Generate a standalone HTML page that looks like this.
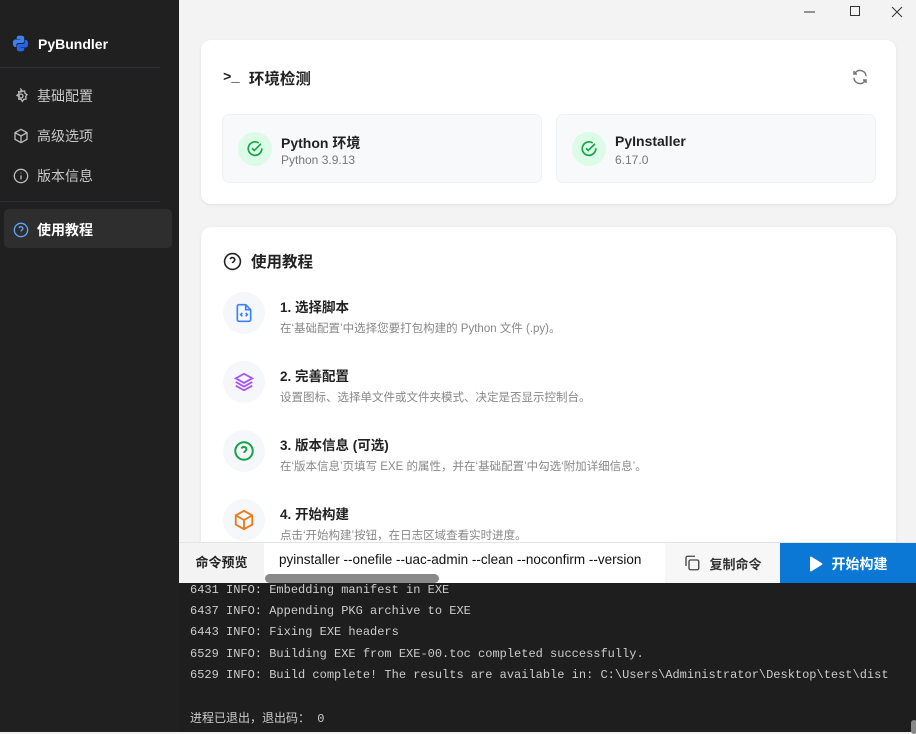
<!DOCTYPE html>
<html><head><meta charset="utf-8"><style>
*{box-sizing:border-box;margin:0;padding:0}
body{width:916px;height:732px;overflow:hidden;background:#f3f3f3;font-family:"Liberation Sans","Noto Sans CJK SC",sans-serif;position:relative}
.side{position:absolute;left:0;top:0;width:179px;height:732px;background:#202020;color:#cfcfcf}
.logo{position:absolute;left:11px;top:34px;display:flex;align-items:center;gap:8px;color:#fff;font-weight:bold;font-size:14px}
.sep{position:absolute;left:0;width:160px;height:1px;background:#2c2f33}
.nav{position:absolute;left:13px;display:flex;align-items:center;gap:8px;font-size:14px;color:#c8c8c8}
.active{position:absolute;left:4px;top:209px;width:168px;height:39px;background:#2e2e2e;border-radius:5px}
.card{position:absolute;background:#fff;border-radius:10px;box-shadow:0 1px 3px rgba(0,0,0,.08)}
.h{position:absolute;font-size:15.5px;font-weight:bold;color:#222;display:flex;align-items:center;gap:9px}
.sub{position:absolute;top:74px;width:320px;height:69px;background:#f7f9fb;border:1px solid #eef1f4;border-radius:7px}
.ok{position:absolute;left:15px;top:17px;width:34px;height:34px;border-radius:50%;background:#dcfce7;display:flex;align-items:center;justify-content:center}
.st{position:absolute;left:58px;top:18px;font-size:14px;font-weight:bold;color:#222}
.sv{position:absolute;left:58px;top:38px;font-size:12px;color:#777}
.step{position:absolute;left:22px;width:680px;height:60px}
.ci{position:absolute;left:0;top:0;width:42px;height:42px;border-radius:50%;background:#f5f7fa;display:flex;align-items:center;justify-content:center}
.t{position:absolute;left:57px;top:4px;font-size:13.5px;font-weight:bold;color:#222}
.d{position:absolute;left:57px;top:28px;font-size:11.5px;color:#888;white-space:nowrap}
.bar{position:absolute;left:179px;top:542px;width:737px;height:41px;background:#fff;border-top:1px solid #e5e5e5}
.log{position:absolute;left:179px;top:583px;width:737px;height:149px;background:#1e1e1e;font-family:"Liberation Mono","Noto Sans CJK SC",monospace;font-size:12px;color:#cccccc}
.log div{position:absolute;left:11px;white-space:pre}
</style></head><body>
<div class="side">
 <div class="logo"><svg width="19" height="19" viewBox="0 0 24 24"><path d="M11.8 2C7 2 7.3 4.1 7.3 4.1v2.2h4.6V7H5.5S2.4 6.6 2.4 11.6s2.700 4.8 2.700 4.8h1.600v-2.300s-.1-2.700 2.700-2.700h4.600s2.600 0 2.600-2.500V4.600S17 2 11.8 2z" fill="#3b82f6"/><path d="M12.2 22c4.800 0 4.500-2.100 4.500-2.100v-2.200h-4.600V17h6.400s3.100.4 3.100-4.600-2.700-4.800-2.700-4.800h-1.600v2.300s.1 2.700-2.700 2.700H10s-2.600 0-2.600 2.500v4.300S7 22 12.200 22z" fill="#2563eb"/></svg>PyBundler</div>
 <div class="sep" style="top:67px"></div>
 <div class="nav" style="top:86px"><svg width="16" height="16" viewBox="0 0 24 24" fill="none" stroke="#bbb" stroke-width="2"><circle cx="12" cy="12" r="3"/><path d="M12 2l2 3 3.500-.5.500 3.500 3 2-2 3 .5 3.500-3.500.5-2 3-2-3-3.500-.5.5-3.500-3-2 3-2-.5-3.500 3.500.5z"/></svg>基础配置</div>
 <div class="nav" style="top:126px"><svg width="16" height="16" viewBox="0 0 24 24" fill="none" stroke="#bbb" stroke-width="2"><path d="M12 2l9 5v10l-9 5-9-5V7z M3 7l9 5 9-5 M12 12v10"/></svg>高级选项</div>
 <div class="nav" style="top:166px"><svg width="16" height="16" viewBox="0 0 24 24" fill="none" stroke="#bbb" stroke-width="2"><circle cx="12" cy="12" r="10"/><path d="M12 11v6M12 7v1"/></svg>版本信息</div>
 <div class="sep" style="top:201px"></div>
 <div class="active"></div>
 <div class="nav" style="top:220px;color:#fff;font-weight:bold"><svg width="16" height="16" viewBox="0 0 24 24" fill="none" stroke="#60a5fa" stroke-width="2"><circle cx="12" cy="12" r="10"/><path d="M9.100 9a3 3 0 015.800 1c0 2-3 2.500-3 4M12 17.500v.1"/></svg>使用教程</div>
</div>
<svg style="position:absolute;left:804px;top:5px" width="100" height="14" viewBox="0 0 100 14" fill="none" stroke="#333" stroke-width="1"><path d="M0 7h11"/><rect x="46.500" y="1.500" width="9" height="9"/><path d="M88 2l10 10M98 2L88 12"/></svg>
<div class="card" style="left:201px;top:40px;width:695px;height:164px">
 <div class="h" style="left:22px;top:27px"><span style="font-family:'Liberation Mono',monospace;font-size:14px">&gt;_</span>环境检测</div>
 <svg style="position:absolute;left:650px;top:28px" width="18" height="18" viewBox="0 0 24 24" fill="none" stroke="#777" stroke-width="2"><path d="M20 11A8 8 0 006 6l-2 2M4 4v4h4M4 13a8 8 0 0014 5l2-2M20 20v-4h-4"/></svg>
 <div class="sub" style="left:21px"><div class="ok"><svg width="18" height="18" viewBox="0 0 24 24" fill="none" stroke="#16a34a" stroke-width="2.200"><path d="M21 11a9 9 0 11-4-7"/><path d="M8 11l3 3 9-9"/></svg></div><div class="st">Python 环境</div><div class="sv">Python 3.9.13</div></div>
 <div class="sub" style="left:355px"><div class="ok"><svg width="18" height="18" viewBox="0 0 24 24" fill="none" stroke="#16a34a" stroke-width="2.200"><path d="M21 11a9 9 0 11-4-7"/><path d="M8 11l3 3 9-9"/></svg></div><div class="st">PyInstaller</div><div class="sv">6.17.0</div></div>
</div>
<div class="card" style="left:201px;top:227px;width:695px;height:330px;overflow:hidden">
 <div class="h" style="left:22px;top:23px"><svg width="19" height="19" viewBox="0 0 24 24" fill="none" stroke="#222" stroke-width="2"><circle cx="12" cy="12" r="10"/><path d="M9.100 9a3 3 0 015.800 1c0 2-3 2.500-3 4M12 17.500v.1"/></svg>使用教程</div>
 <div class="step" style="top:65px"><div class="ci"><svg width="20" height="20" viewBox="0 0 24 24" fill="none" stroke="#3b82f6" stroke-width="2"><path d="M14 2H6a2 2 0 00-2 2v16a2 2 0 002 2h12a2 2 0 002-2V8z M14 2v6h6 M10 12l-2 2 2 2 M14 12l2 2-2 2"/></svg></div><div class="t">1. 选择脚本</div><div class="d">在‘基础配置’中选择您要打包构建的 Python 文件 (.py)。</div></div>
 <div class="step" style="top:134px"><div class="ci"><svg width="22" height="22" viewBox="0 0 24 24" fill="none" stroke="#a855f7" stroke-width="2"><path d="M12 3l9 5-9 5-9-5z M3 12l9 5 9-5 M3 16l9 5 9-5"/></svg></div><div class="t">2. 完善配置</div><div class="d">设置图标、选择单文件或文件夹模式、决定是否显示控制台。</div></div>
 <div class="step" style="top:203px"><div class="ci"><svg width="22" height="22" viewBox="0 0 24 24" fill="none" stroke="#16a34a" stroke-width="2.200"><circle cx="12" cy="12" r="9.500"/><path d="M9.300 9.300a2.800 2.800 0 015.400 1c0 1.800-2.700 2.200-2.700 3.800M12 17v.1"/></svg></div><div class="t">3. 版本信息 (可选)</div><div class="d">在‘版本信息’页填写 EXE 的属性，并在‘基础配置’中勾选‘附加详细信息’。</div></div>
 <div class="step" style="top:272px"><div class="ci"><svg width="22" height="22" viewBox="0 0 24 24" fill="none" stroke="#ea7a1a" stroke-width="2"><path d="M12 2l9 5v10l-9 5-9-5V7z M3 7l9 5 9-5 M12 12v10"/></svg></div><div class="t">4. 开始构建</div><div class="d">点击‘开始构建’按钮，在日志区域查看实时进度。</div></div>
</div>
<div class="bar">
 <div style="position:absolute;left:0;top:0;width:85px;height:40px;background:#f3f3f3;font-size:13px;font-weight:bold;color:#222;line-height:40px;text-align:center">命令预览</div>
 <div style="position:absolute;left:100px;top:0;width:386px;height:34px;overflow:hidden;font-size:13.5px;color:#111;line-height:34px;white-space:nowrap">pyinstaller --onefile --uac-admin --clean --noconfirm --version</div>
 <div style="position:absolute;left:86px;top:31px;width:174px;height:9px;border-radius:5px;background:#8a8a8a"></div>
 <div style="position:absolute;left:486px;top:0;width:115px;height:40px;background:#f7f7f7;display:flex;align-items:center;justify-content:center;gap:8px;font-size:13px;font-weight:bold;color:#333"><svg width="18" height="18" viewBox="0 0 24 24" fill="none" stroke="#444" stroke-width="1.800"><rect x="8" y="8" width="13" height="13" rx="2"/><path d="M4 16V5a2 2 0 012-2h10"/></svg>复制命令</div>
 <div style="position:absolute;left:601px;top:0;width:136px;height:41px;background:#0a78d4;display:flex;align-items:center;justify-content:center;gap:9px;font-size:14px;font-weight:bold;color:#fff"><svg width="14" height="16" viewBox="0 0 14 16"><path d="M1 1.500v13a1 1 0 001.500.8l10.500-6.500a1 1 0 000-1.600L2.500.7A1 1 0 001 1.500z" fill="#fff"/></svg>开始构建</div>
</div>
<div class="log">
 <div style="top:0px">6431 INFO: Embedding manifest in EXE</div>
 <div style="top:21px">6437 INFO: Appending PKG archive to EXE</div>
 <div style="top:42px">6443 INFO: Fixing EXE headers</div>
 <div style="top:64px">6529 INFO: Building EXE from EXE-00.toc completed successfully.</div>
 <div style="top:85px">6529 INFO: Build complete! The results are available in: C:\Users\Administrator\Desktop\test\dist</div>
 <div style="top:126px">进程已退出，退出码： 0</div>
 <span style="position:absolute;left:732px;top:137px;width:6px;height:14px;background:#888;border-radius:3px"></span>
</div>
</body></html>
